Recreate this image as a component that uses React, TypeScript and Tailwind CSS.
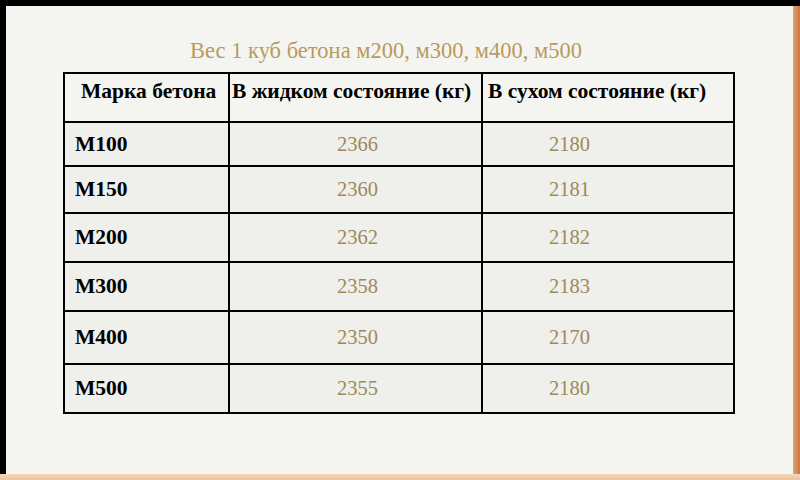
const rows = [
  { mark: 'М100', wet: '2366', dry: '2180', h: 'h-[44px]' },
  { mark: 'М150', wet: '2360', dry: '2181', h: 'h-[47px]' },
  { mark: 'М200', wet: '2362', dry: '2182', h: 'h-[49px]' },
  { mark: 'М300', wet: '2358', dry: '2183', h: 'h-[49px]' },
  { mark: 'М400', wet: '2350', dry: '2170', h: 'h-[53px]' },
  { mark: 'М500', wet: '2355', dry: '2180', h: 'h-[49px]' },
];

const serif = "font-['Liberation_Serif','Times_New_Roman',serif]";

export default function App() {
  return (
    <div className={`flex h-[480px] w-[800px] flex-col bg-[#f4f4f0] ${serif}`}>
      <div className="h-[6px] w-full bg-black" />
      <div className="flex flex-1">
        <div className="w-[6px] bg-black" />
        <div className="flex flex-1 flex-col bg-[#f4f5f1]">
          <div className="pt-[33px] pl-[184px] text-[22.5px] leading-[24px] text-[#b99a5e]">
            Вес 1 куб бетона м200, м300, м400, м500
          </div>
          <table className="ml-[57px] mt-[9px] w-[670px] table-fixed border-collapse border-2 border-black text-black">
            <colgroup>
              <col className="w-[165px]" />
              <col className="w-[253px]" />
              <col className="w-[252px]" />
            </colgroup>
            <thead>
              <tr className="h-[49px]">
                <th className="border-2 border-black pb-[14px] pl-[16px] text-left text-[21.5px] font-bold leading-[24px]">Марка бетона</th>
                <th className="border-2 border-black pb-[14px] pl-[2px] text-left text-[21.5px] font-bold leading-[24px]">В жидком состояние (кг)</th>
                <th className="border-2 border-black pb-[14px] pl-[5px] text-left text-[21.5px] font-bold leading-[24px]">В сухом состояние (кг)</th>
              </tr>
            </thead>
            <tbody>
              {rows.map((r) => (
                <tr key={r.mark} className={r.h}>
                  <td className="border-2 border-black bg-[#efefeb] pl-[10px] text-[21.5px] font-bold">{r.mark}</td>
                  <td className="border-2 border-black bg-[#efefeb] pl-[107px] text-[20.5px] text-[#9d8a5c]">{r.wet}</td>
                  <td className="border-2 border-black bg-[#efefeb] pl-[66px] text-[20.5px] text-[#9d8a5c]">{r.dry}</td>
                </tr>
              ))}
            </tbody>
          </table>
        </div>
        <div className="w-[7px] bg-gradient-to-r from-[#e2a273] to-[#c9783f]" />
      </div>
      <div className="h-[6px] w-full bg-gradient-to-b from-[#f6d9bd] to-[#eec39c]" />
    </div>
  );
}
